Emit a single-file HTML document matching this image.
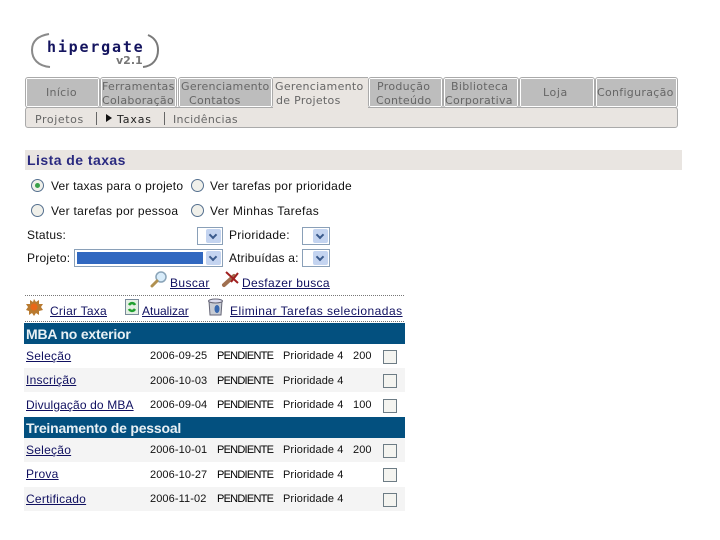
<!DOCTYPE html>
<html><head><meta charset="utf-8"><style>
html,body{margin:0;padding:0;background:#fff}
body{width:720px;height:540px;position:relative;overflow:hidden;font-family:"Liberation Sans",sans-serif;font-size:12px;color:#111}
.a,.t,.v,a{position:absolute;white-space:nowrap}
.b{position:absolute}
.t{letter-spacing:.25px;line-height:14px}
a{color:#101060;text-decoration:underline;letter-spacing:.25px;line-height:14px}
.v{font-family:"DejaVu Sans",sans-serif;font-size:11px;color:#666;line-height:13px;letter-spacing:.3px}
.tab{position:absolute;top:77px;height:31px;box-sizing:border-box;border:1px solid #aaa;border-radius:3px;background:#fff;padding:1px}
.tab i{display:block;height:27px;background:#bdbdbd}
.r{position:absolute;width:13px;height:13px;box-sizing:border-box;border:1px solid #55708f;border-radius:50%;background:#f0f0ea}
.r b{position:absolute;left:3px;top:3px;width:5px;height:5px;border-radius:50%;background:#3aa04a}
.s{position:absolute;box-sizing:border-box;border:1px solid #8aa0b8;background:#fff;height:18px}
.s i{position:absolute;right:1px;top:1px;width:15px;height:14px;background:#c4d4f0;border-radius:2px}
.s i:after{content:"";position:absolute;left:4px;top:3px;width:4px;height:4px;border-right:2px solid #3a5a8c;border-bottom:2px solid #3a5a8c;transform:rotate(45deg)}
.c{position:absolute;left:383px;width:14px;height:14px;box-sizing:border-box;border:1px solid #6d7c85;background:#f4f4f0}
.d{font-size:11px;letter-spacing:.1px}
.p{letter-spacing:-.75px;color:#000}
.h{position:absolute;white-space:nowrap;left:26px;font:bold 14px 'Liberation Sans',sans-serif;color:#e8f0f4;line-height:16px;letter-spacing:-.2px}
</style></head><body>
<svg class="a" style="left:28px;top:30px" width="135" height="40"><path d="M21 4C9 6 4 12 4 20c0 9 6 16 18 17" fill="none" stroke="#8a8a8a" stroke-width="2"/><path d="M120 5c7 3 10 8 10 15 0 9-5 16-15 17" fill="none" stroke="#7a7a7a" stroke-width="2"/></svg>
<div class="a" style="left:47px;top:39px;font:bold 15px 'DejaVu Sans Mono','Liberation Mono',monospace;color:#14145f;letter-spacing:1.8px;line-height:16px">hipergate</div>
<div class="a" style="left:116px;top:54px;font:bold 11px 'DejaVu Sans',sans-serif;color:#777;line-height:13px">v2.1</div>

<div class="b" style="left:25px;top:107px;width:653px;height:21px;box-sizing:border-box;background:#e9e5e1;border:1px solid #aaa;border-radius:3px"></div>
<div class="b" style="left:273px;top:77px;width:95px;height:32px;background:#e9e5e1;border-top:1px solid #aaa;box-sizing:border-box"></div>
<div class="tab" style="left:25px;width:75px"><i></i></div>
<div class="tab" style="left:100px;width:77px"><i></i></div>
<div class="tab" style="left:178px;width:95px"><i></i></div>
<div class="tab" style="left:368px;width:75px"><i></i></div>
<div class="tab" style="left:443px;width:76px"><i></i></div>
<div class="tab" style="left:519px;width:76px"><i></i></div>
<div class="tab" style="left:595px;width:83px"><i></i></div>

<div class="v" style="left:46px;top:86px">Início</div>
<div class="v" style="left:102px;top:80px">Ferramentas</div><div class="v" style="left:102px;top:94px">Colaboração</div>
<div class="v" style="left:181px;top:80px">Gerenciamento</div><div class="v" style="left:189px;top:94px">Contatos</div>
<div class="v" style="left:275px;top:80px">Gerenciamento</div><div class="v" style="left:276px;top:94px">de Projetos</div>
<div class="v" style="left:377px;top:80px">Produção</div><div class="v" style="left:376px;top:94px">Conteúdo</div>
<div class="v" style="left:451px;top:80px">Biblioteca</div><div class="v" style="left:445px;top:94px">Corporativa</div>
<div class="v" style="left:543px;top:86px;letter-spacing:.6px">Loja</div>
<div class="v" style="left:597px;top:86px">Configuração</div>

<div class="v" style="left:35px;top:113px;letter-spacing:.6px">Projetos</div>
<div class="b" style="left:96px;top:112px;width:1px;height:13px;background:#666"></div>
<div class="b" style="left:106px;top:114px;width:0;height:0;border-left:6px solid #111;border-top:4px solid transparent;border-bottom:4px solid transparent"></div>
<div class="v" style="left:117px;top:113px;color:#222;letter-spacing:.85px">Taxas</div>
<div class="b" style="left:164px;top:112px;width:1px;height:13px;background:#666"></div>
<div class="v" style="left:173px;top:113px">Incidências</div>

<div class="b" style="left:25px;top:150px;width:657px;height:20px;background:#e9e5e1"></div>
<div class="a" style="left:27px;top:152px;font:bold 14px 'Liberation Sans',sans-serif;color:#2a2a80;line-height:16px;letter-spacing:.45px">Lista de taxas</div>

<div class="r" style="left:31px;top:179px"><b></b></div>
<div class="t" style="left:51px;top:179px;letter-spacing:.2px">Ver taxas para o projeto</div>
<div class="r" style="left:191px;top:179px"></div>
<div class="t" style="left:210px;top:179px">Ver tarefas por prioridade</div>
<div class="r" style="left:31px;top:204px"></div>
<div class="t" style="left:51px;top:204px;letter-spacing:.3px">Ver tarefas por pessoa</div>
<div class="r" style="left:191px;top:204px"></div>
<div class="t" style="left:210px;top:204px;letter-spacing:.37px">Ver Minhas Tarefas</div>

<div class="t" style="left:27px;top:228px">Status:</div>
<div class="s" style="left:197px;top:227px;width:26px"><i></i></div>
<div class="t" style="left:229px;top:228px">Prioridade:</div>
<div class="s" style="left:302px;top:227px;width:28px"><i></i></div>
<div class="t" style="left:27px;top:251px">Projeto:</div>
<div class="s" style="left:74px;top:249px;width:149px"><b class="b" style="left:2px;top:2px;width:126px;height:12px;background:#3168c0"></b><i></i></div>
<div class="t" style="left:229px;top:251px;letter-spacing:.17px">Atribuídas a:</div>
<div class="s" style="left:302px;top:249px;width:28px"><i></i></div>

<svg class="a" style="left:150px;top:270px" width="20" height="20"><circle cx="11" cy="7" r="5" fill="#d8ecfa" stroke="#8aa4b8" stroke-width="1.5"/><path d="M7 11 2 16" stroke="#b09050" stroke-width="3" stroke-linecap="round"/></svg>
<a style="left:170px;top:276px;letter-spacing:.4px">Buscar</a>
<svg class="a" style="left:221px;top:270px" width="20" height="20"><path d="M3 15 13 6" stroke="#a07050" stroke-width="4" stroke-linecap="round"/><path d="M5 2l12 11M17 3 10 12" stroke="#a02020" stroke-width="2"/></svg>
<a style="left:242px;top:276px;letter-spacing:.32px">Desfazer busca</a>

<div class="b" style="left:25px;top:295px;width:379px;border-top:1px dotted #777"></div>
<svg class="a" style="left:26px;top:299px" width="18" height="18"><path d="M8 0l2 3 3-2 0 4 4 0-2 3 2 3-4 1 0 4-3-2-2 3-2-3-3 2 0-4-3-1 2-3-2-3 4 0 0-4 3 2z" fill="#b87a30"/><circle cx="8" cy="8" r="3.5" fill="#e86818"/></svg>
<a style="left:50px;top:304px">Criar Taxa</a>
<svg class="a" style="left:125px;top:299px" width="15" height="17"><rect x=".5" y=".5" width="13" height="15" fill="#e4f0e4" stroke="#7a8a9a"/><path d="M4 6c2-3 5-2 6 0M10 10c-2 3-5 2-6 0" fill="none" stroke="#20a030" stroke-width="2.5"/></svg>
<a style="left:142px;top:304px;letter-spacing:0">Atualizar</a>
<svg class="a" style="left:207px;top:298px" width="17" height="18"><path d="M2 3h13l-1 14H3z" fill="#c8ccd4" stroke="#667"/><ellipse cx="8.5" cy="3" rx="7" ry="2" fill="#dde" stroke="#667"/><ellipse cx="10" cy="11" rx="2.5" ry="4" fill="#3868b0"/></svg>
<a style="left:230px;top:304px;letter-spacing:.46px">Eliminar Tarefas selecionadas</a>
<div class="b" style="left:25px;top:321px;width:379px;border-top:1px dotted #777"></div>

<div class="b" style="left:24px;top:323px;width:381px;height:21px;background:#03507f"></div>
<div class="h" style="top:326px">MBA no exterior</div>
<div class="b" style="left:24px;top:368px;width:381px;height:24px;background:#f4f4f4"></div>
<a style="left:26px;top:349px">Seleção</a><div class="t d" style="left:150px;top:349px">2006-09-25</div><div class="t d p" style="left:217px;top:349px">PENDIENTE</div><div class="t d" style="left:283px;top:349px">Prioridade 4</div><div class="t d" style="left:353px;top:349px">200</div><div class="c" style="top:350px"></div>
<a style="left:26px;top:373px">Inscrição</a><div class="t d" style="left:150px;top:374px">2006-10-03</div><div class="t d p" style="left:217px;top:374px">PENDIENTE</div><div class="t d" style="left:283px;top:374px">Prioridade 4</div><div class="c" style="top:374px"></div>
<a style="left:26px;top:398px;letter-spacing:.13px">Divulgação do MBA</a><div class="t d" style="left:150px;top:398px">2006-09-04</div><div class="t d p" style="left:217px;top:398px">PENDIENTE</div><div class="t d" style="left:283px;top:398px">Prioridade 4</div><div class="t d" style="left:353px;top:398px">100</div><div class="c" style="top:399px"></div>

<div class="b" style="left:24px;top:417px;width:381px;height:21px;background:#03507f"></div>
<div class="h" style="top:420px">Treinamento de pessoal</div>
<div class="b" style="left:24px;top:438px;width:381px;height:24px;background:#f4f4f4"></div>
<div class="b" style="left:24px;top:487px;width:381px;height:24px;background:#f4f4f4"></div>
<a style="left:26px;top:443px">Seleção</a><div class="t d" style="left:150px;top:443px">2006-10-01</div><div class="t d p" style="left:217px;top:443px">PENDIENTE</div><div class="t d" style="left:283px;top:443px">Prioridade 4</div><div class="t d" style="left:353px;top:443px">200</div><div class="c" style="top:444px"></div>
<a style="left:26px;top:467px">Prova</a><div class="t d" style="left:150px;top:468px">2006-10-27</div><div class="t d p" style="left:217px;top:468px">PENDIENTE</div><div class="t d" style="left:283px;top:468px">Prioridade 4</div><div class="c" style="top:468px"></div>
<a style="left:26px;top:492px">Certificado</a><div class="t d" style="left:150px;top:492px">2006-11-02</div><div class="t d p" style="left:217px;top:492px">PENDIENTE</div><div class="t d" style="left:283px;top:492px">Prioridade 4</div><div class="c" style="top:493px"></div>
</body></html>
